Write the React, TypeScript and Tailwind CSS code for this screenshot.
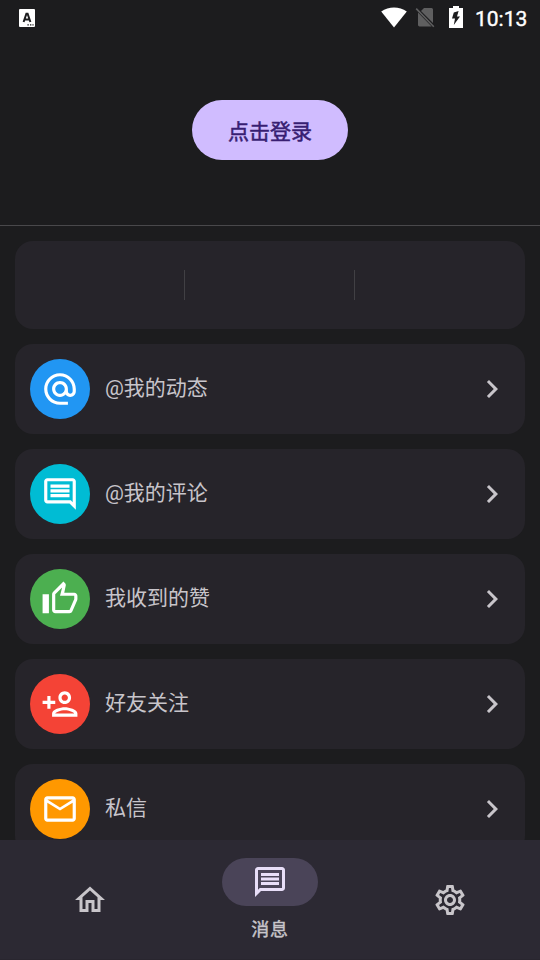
import type { IconType } from "react-icons";
import {
  MdAlternateEmail,
  MdChevronRight,
  MdMailOutline,
  MdOutlineComment,
  MdOutlineHome,
  MdOutlineMessage,
  MdOutlinePersonAdd,
  MdOutlineSettings,
  MdOutlineThumbUp,
} from "react-icons/md";

type MessageEntry = {
  label: string;
  icon: IconType;
  color: string;
};

const entries: MessageEntry[] = [
  { label: "@我的动态", icon: MdAlternateEmail, color: "bg-[#2196f3]" },
  { label: "@我的评论", icon: MdOutlineComment, color: "bg-[#00bcd4]" },
  { label: "我收到的赞", icon: MdOutlineThumbUp, color: "bg-[#4caf50]" },
  { label: "好友关注", icon: MdOutlinePersonAdd, color: "bg-[#f44336]" },
  { label: "私信", icon: MdMailOutline, color: "bg-[#ff9800]" },
];

function StatusBar() {
  return (
    <div className="flex h-9 shrink-0 items-center pb-0.5 pl-[19px] pr-3 text-white">
      <svg className="mt-0.5" width="16" height="18" viewBox="0 0 16 18" aria-hidden="true">
        <rect width="16" height="18" rx="1" fill="#fff" />
        <path
          d="M4.6 13 7.4 4.8h1.2L11.4 13M5.6 10.6h4.8"
          fill="none"
          stroke="#1c1c1e"
          strokeWidth="2"
        />
        <path d="M8.4 15.2h1.4v1.4H8.4zM11 15.2h1.4v1.4H11zM13.4 15.2h1.2v1.4h-1.2z" fill="#1c1c1e" />
      </svg>
      <svg className="ml-auto" width="26" height="21" viewBox="0 0 26 21" aria-hidden="true">
        <path d="M0.2 4.5C7.8-.9 18.2-.9 25.8 4.5L13 20.6z" fill="#fff" />
      </svg>
      <svg className="ml-2" width="21" height="21" viewBox="0 0 21 21" aria-hidden="true">
        <path d="M9 1h7.5a1.5 1.5 0 0 1 1.5 1.5v13.6L6 4zM3 5.4 16.6 19.4H4.5A1.5 1.5 0 0 1 3 18z" fill="#5f5f60" />
        <path d="M1.2 1.6 18.8 19.8" stroke="#5f5f60" strokeWidth="1.6" />
      </svg>
      <svg className="ml-[13px]" width="14" height="22" viewBox="0 0 14 22" aria-hidden="true">
        <path d="M4 0h6v2h4v20H0V2h4z" fill="#fff" />
        <path d="M9.6 5 4.8 6.4 3 12.6h3L4.8 19 11 10.4H8z" fill="#1c1c1e" />
      </svg>
      <span className="ml-3 mt-[5px] w-[53px] text-[21px] leading-none [-webkit-text-stroke:0.4px]">10:13</span>
    </div>
  );
}

function EntryCard({ label, icon: Icon, color }: MessageEntry) {
  return (
    <button className="flex h-[90px] shrink-0 items-center rounded-[18px] bg-[#26242a] px-[15px] text-left">
      <span className={`flex size-[60px] items-center justify-center rounded-full text-white ${color}`}>
        <Icon size={38} />
      </span>
      <span className="ml-[15px] flex-1 pb-0.5 text-[21px] leading-7">{label}</span>
      <MdChevronRight size={36} />
    </button>
  );
}

function BottomNav() {
  return (
    <nav className="grid h-[120px] shrink-0 grid-cols-3 border-b border-[#29262f] bg-[#2c2933]">
      <button className="flex items-center justify-center" aria-label="首页">
        <MdOutlineHome size={36} />
      </button>
      <button className="flex flex-col items-center pt-[18px]">
        <span className="flex h-12 w-24 items-center justify-center rounded-full bg-[#4a4458] text-[#e8def8]">
          <MdOutlineMessage size={36} />
        </span>
        <span className="mt-3 text-[18px] leading-6 tracking-[0.75px] [-webkit-text-stroke:0.4px]">消息</span>
      </button>
      <button className="flex items-center justify-center" aria-label="设置">
        <MdOutlineSettings size={36} />
      </button>
    </nav>
  );
}

export default function App() {
  return (
    <div className="flex h-screen flex-col overflow-hidden bg-[#1c1c1e] font-[Roboto,'Noto_Sans_CJK_SC',sans-serif] text-[#c8c5ca]">
      <StatusBar />
      <header className="flex h-[190px] shrink-0 items-start justify-center border-b border-[#49484b] pt-16">
        <button className="h-[60px] w-[156px] rounded-full bg-[#d0bcff] pt-1.5 text-[21px] text-[#381e72] [-webkit-text-stroke:0.5px]">
          点击登录
        </button>
      </header>

      <main className="flex min-h-0 flex-1 flex-col gap-[15px] overflow-hidden px-[15px] pt-[15px]">
        <div className="grid h-[88px] shrink-0 grid-cols-3 items-center rounded-[18px] bg-[#26242a]">
          <div className="h-[30px] border-r border-[#414044]" />
          <div className="h-[30px] border-r border-[#414044]" />
        </div>
        {entries.map((entry) => (
          <EntryCard key={entry.label} {...entry} />
        ))}
      </main>

      <BottomNav />
    </div>
  );
}
